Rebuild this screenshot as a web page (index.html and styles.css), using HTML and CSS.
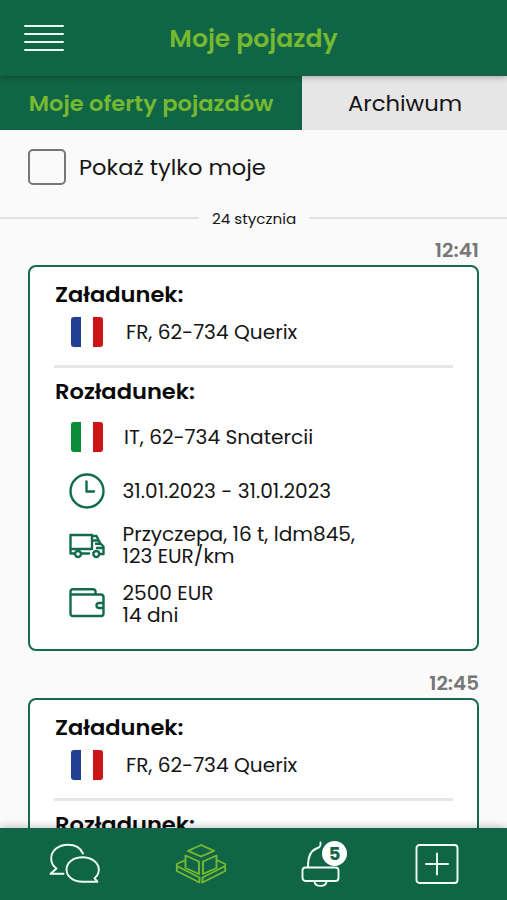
FILE: index.html
```html
<!DOCTYPE html>
<html lang="pl">
<head>
<meta charset="utf-8">
<title>Moje pojazdy</title>
<link rel="stylesheet" href="styles.css">
</head>
<body>
<div class="app">
  <header class="header">
    <div class="menu"><i></i><i></i><i></i><i></i></div>
    <h1 class="title">Moje pojazdy</h1>
  </header>
  <nav class="tabs">
    <div class="tab tab-active"><span>Moje oferty pojazdów</span></div>
    <div class="tab tab-archive"><span>Archiwum</span></div>
  </nav>
  <main class="content">
    <label class="filter"><span class="box"></span><span class="filter-text">Pokaż tylko moje</span></label>
    <div class="date"><span>24 stycznia</span></div>
    <div class="time">12:41</div>
    <section class="card">
      <h2 class="load">Załadunek:</h2>
      <div class="row row-fr"><div class="icon"><span class="flag flag-fr"></span></div><p>FR, 62-734 Querix</p></div>
      <hr>
      <h2 class="unload">Rozładunek:</h2>
      <div class="row row-it"><div class="icon"><span class="flag flag-it"></span></div><p>IT, 62-734 Snatercii</p></div>
      <div class="row row-clock">
        <div class="icon"><svg width="36" height="36" viewBox="0 0 36 36"><circle cx="18" cy="18" r="16.5"/><path d="M17.500 8.500V18.500H25"/></svg></div>
        <p>31.01.2023 - 31.01.2023</p>
      </div>
      <div class="row row-truck">
        <div class="icon"><svg width="36" height="26" viewBox="0 0 36 26"><path d="M1.500 2H23V16H1.500ZM23 3H27.500L31 10L34.500 13.500V21H31.500M24 7.500H29.500M27 10.800H31.500M28 15H34M1.500 16V20.500H5.500M12.500 20.500H20"/><circle cx="9" cy="21" r="3"/><circle cx="27.300" cy="21" r="3"/></svg></div>
        <p>Przyczepa, 16 t, ldm845,<br>123 EUR/km</p>
      </div>
      <div class="row row-wallet">
        <div class="icon"><svg width="36" height="32" viewBox="0 0 36 32"><path d="M1.500 8V4.500Q1.500 2.200 4 2.200H24Q26.500 2.200 26.500 4.500V7.500M1.500 7.500H31.500Q34.500 7.500 34.500 10V26.500Q34.500 29 32 29H4Q1.500 29 1.500 26.500ZM34.500 16H30.500Q27.500 16 27.500 18.500T30.500 21H34.500"/></svg></div>
        <p>2500 EUR<br>14 dni</p>
      </div>
    </section>
    <div class="time time-second">12:45</div>
    <section class="card">
      <h2 class="load">Załadunek:</h2>
      <div class="row row-fr"><div class="icon"><span class="flag flag-fr"></span></div><p>FR, 62-734 Querix</p></div>
      <hr>
      <h2 class="unload">Rozładunek:</h2>
    </section>
  </main>
  <nav class="bottom">
    <div class="item"><svg width="52" height="42" viewBox="0 0 52 42"><path d="M34 10.500C31.500 5 26 1.800 19 1.800C9 1.800 2.200 8 2.200 15.500C2.200 19.500 4 23 7.500 25.500L1.500 30.800H14.500"/><path d="M48.500 38.800L45.500 35.200C48.500 33 49.800 30 49.800 26.500C49.800 19.500 42.500 14.200 33.500 14.200S17.500 19.500 17.500 26.500S24.500 38.800 33.500 38.800Z"/></svg></div>
    <div class="item"><svg class="boxes" width="52" height="42" viewBox="0 0 52 42"><path d="M26 2L39 7.800L26 13.500L13 7.800ZM10.500 12.500L24 18.500V31L10.500 25ZM41.500 12.500L28 18.500V31L41.500 25ZM10.500 17L1.800 21V28L24.500 39.500V34.500L1.800 23M41.500 17L50.200 21V28L27.500 39.500V34.500L50.200 23"/></svg></div>
    <div class="item item-bell"><svg width="48" height="48" viewBox="0 0 48 48"><path d="M20.500 2.500C21 6.500 19.500 7.500 16.500 8.500C10 11 8 17 8 26V27"/><rect x="2.500" y="27.500" width="36" height="13.500" rx="3"/><path d="M14.500 41.500C15 47.300 26 47.300 26.500 41.500"/></svg><b class="badge">5</b></div>
    <div class="item item-add"><svg width="44" height="42" viewBox="0 0 44 42"><rect x="1.500" y="2" width="41" height="38" rx="3"/><path d="M22 10.500V31.500M11 21H33"/></svg></div>
  </nav>
</div>
</body>
</html>
```

FILE: styles.css
```css
* { box-sizing: border-box; margin: 0; padding: 0; }
body { font-family: Poppins, Inter, sans-serif; color: #151515; background: #fafafa; overflow: hidden; }
.app { height: 900px; display: flex; flex-direction: column; }
.header { flex: none; height: 76px; background: #106547; display: grid; grid-template-columns: 24px 40px 1fr 64px; align-items: center; z-index: 1; box-shadow: 0 1px 7px rgba(0,0,0,.3); }
.menu { grid-column: 2; display: grid; gap: 5.500px; }
.menu i { height: 2.600px; background: #e6fff5; border-radius: 1px; }
.title { font-size: 25.100px; font-weight: 600; color: #76b82f; text-align: center; white-space: nowrap; line-height: 30px; padding-top: 2px; }
.tabs { flex: none; height: 54px; display: grid; grid-template-columns: 302px 1fr; }
.tab { display: flex; align-items: center; justify-content: center; white-space: nowrap; }
.tab-active { background: #106547; color: #76b82f; font-size: 22.600px; font-weight: 600; }
.tab-archive { background: #e6e6e6; color: #151515; font-size: 22.700px; padding-left: 1px; }
.content { flex: 1; min-height: 0; overflow: hidden; }
.filter { display: flex; align-items: center; padding: 19px 0 0 28px; gap: 13px; }
.box { width: 38px; height: 36px; border: 2px solid #777; border-radius: 5px; }
.filter-text { font-size: 22.600px; line-height: 36px; }
.date { display: flex; align-items: center; gap: 13px; height: 24px; margin-top: 21px; font-size: 15.200px; white-space: nowrap; }
.date::before, .date::after { content: ""; flex: 1; height: 2px; background: #e2e2e2; }
.date::before { flex: 0 0 199px; }
.time { height: 24px; margin-top: 8px; padding-right: 28px; text-align: right; color: #777; font-size: 19.900px; font-weight: 600; line-height: 24px; }
.title, .tab span, .filter-text, .date span, .time, h2, .row p { transform: scaleY(.95); }
.card { height: 386px; margin: 3px 28px 0; padding: 14px 24px 0; border: 2.500px solid #146b4d; border-radius: 8px; background: #fff; }
.time-second { margin-top: 20px; }
h2 { height: 28px; line-height: 27px; font-size: 22.600px; font-weight: 600; color: #090909; padding-left: 1px; }
hr { height: 2.500px; border: 0; background: #e6e6e6; margin: 10px 0 10.500px; }
.row { display: flex; align-items: center; height: 46px; font-size: 20.120px; line-height: 23px; white-space: nowrap; }
.row p { margin-top: -1px; }
.row-fr p { margin-top: 1px; }
.icon { width: 36px; margin-left: 15px; margin-right: 17.500px; display: flex; justify-content: center; flex: none; }
.row-fr .icon { margin-right: 21px; }
.row-it .icon { margin-right: 19px; }
.row-it { margin-top: 9px; }
.row-clock, .row-truck { margin-top: 8px; }
.row-wallet { margin-top: 13px; }
.row-wallet svg { margin-top: -4px; }
.row-clock svg { margin-top: -2px; }
.flag { width: 32px; height: 30px; border-radius: 3px; box-shadow: 0 0 1px #bbb; }
.flag-fr { background: linear-gradient(90deg, #223f93 30%, #fff 30% 70%, #cb1519 70%); }
.flag-it { background: linear-gradient(90deg, #0b8c38 30%, #fff 30% 70%, #cb1519 70%); }
.row-it .flag { margin-top: -2px; }
svg { display: block; fill: none; stroke: #126b4c; stroke-width: 2.400; stroke-linecap: round; stroke-linejoin: round; }
.bottom { flex: none; height: 72px; background: #106547; display: grid; grid-template-columns: 149px 103px 145px 79px; z-index: 1; box-shadow: 0 -1px 8px rgba(0,0,0,.25); }
.item { position: relative; display: flex; align-items: center; justify-content: center; }
.bottom svg { stroke: #effff8; stroke-width: 1.900; }
.bottom .boxes { stroke: #76b82f; stroke-width: 1.900; }
.item-bell svg { margin-left: -1px; margin-top: -1px; }
.badge { position: absolute; left: 70px; top: 13px; width: 25px; height: 25px; border-radius: 50%; background: #fff; color: #106547; font-size: 18px; line-height: 26px; text-align: center; }
```
